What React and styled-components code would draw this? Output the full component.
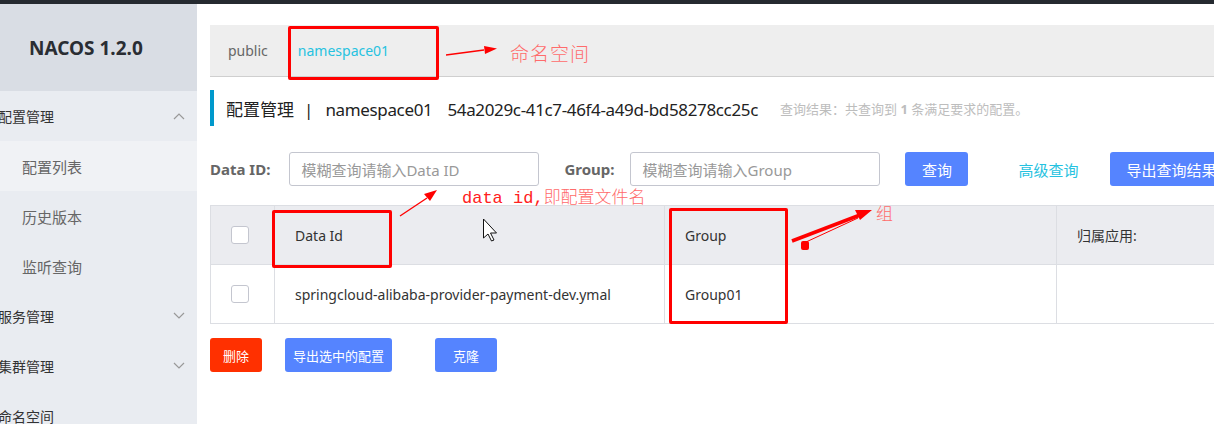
import React from 'react'
import styled, { createGlobalStyle } from 'styled-components'

const GlobalStyle = createGlobalStyle`
  html, body {
    margin: 0;
    padding: 0;
    background: #fff;
  }
  body {
    font-family: "Noto Sans", "Noto Sans CJK SC", sans-serif;
    font-size: 14px;
    color: #333;
  }
`

const Page = styled.div`
  position: relative;
  width: 1214px;
  height: 424px;
  overflow: hidden;
  display: flex;
  flex-direction: column;
`

const TopBar = styled.div`
  height: 4px;
  background: #252a30;
  flex-shrink: 0;
`

const Body = styled.div`
  flex: 1;
  display: flex;
  min-height: 0;
`

const Sidebar = styled.aside`
  width: 197px;
  flex-shrink: 0;
  background: #e9ecf1;
  display: flex;
  flex-direction: column;
  overflow: hidden;
`

const Brand = styled.div`
  height: 87px;
  flex-shrink: 0;
  background: #d9dde4;
  display: flex;
  align-items: center;
  padding-left: 29px;
  font-family: "Noto Sans", sans-serif;
  font-weight: 700;
  font-size: 19px;
  color: #2a2d33;
`

const MenuItem = styled.div`
  height: 50px;
  flex-shrink: 0;
  display: flex;
  align-items: center;
  justify-content: space-between;
  padding: 0 12px 0 ${p => (p.sub ? '22px' : '0')};
  background: ${p => (p.active ? '#f0f2f5' : 'transparent')};
  color: ${p => (p.sub ? '#666' : '#333')};
  font-size: ${p => (p.sub ? '15px' : '14px')};
  span {
    margin-left: ${p => (p.sub ? '0' : '-2px')};
  }
`

const Chevron = ({ up }) => (
  <svg width="12" height="8" viewBox="0 0 12 8">
    <path
      d={up ? 'M1 7 L6 2 L11 7' : 'M1 1 L6 6 L11 1'}
      fill="none"
      stroke="#999"
      strokeWidth="1.2"
    />
  </svg>
)

const Main = styled.main`
  flex: 1;
  min-width: 0;
  padding: 21px 0 0 13px;
  overflow: hidden;
`

const TabBar = styled.div`
  height: 51px;
  background: #eeeeee;
  border-bottom: 1px solid #cfcfcf;
  display: flex;
  align-items: center;
  padding-left: 18px;
  gap: 30px;
`

const Tab = styled.span`
  font-size: 14px;
  color: ${p => (p.current ? '#26c2e0' : '#666')};
`

const TitleRow = styled.div`
  margin-top: 13px;
  height: 36px;
  border-left: 4px solid #0099cc;
  display: flex;
  align-items: center;
  padding-left: 12px;
  white-space: nowrap;
`

const Title = styled.span`
  font-size: 17px;
  color: #222;
`

const Divider = styled.span`
  margin: 0 12px 0 10px;
`

const TitleCode = styled.span`
  letter-spacing: -0.35px;
  margin-left: ${p => p.gap || 0}px;
`

const ResultText = styled.span`
  margin-left: 22px;
  font-size: 13px;
  color: #bdbdbd;
  b {
    font-weight: 700;
    color: #bdbdbd;
  }
`

const SearchRow = styled.div`
  margin-top: 26px;
  height: 34px;
  display: flex;
  align-items: center;
  white-space: nowrap;
`

const Label = styled.label`
  font-weight: 700;
  font-size: 15px;
  color: #666;
  margin-right: ${p => p.gap}px;
`

const Input = styled.div`
  width: 250px;
  height: 34px;
  flex-shrink: 0;
  box-sizing: border-box;
  border: 1px solid #c4c6cf;
  border-radius: 3px;
  display: flex;
  align-items: center;
  padding-left: 11px;
  color: #999;
  font-size: 15px;
  margin-right: ${p => p.gap}px;
`

const Button = styled.button`
  height: 34px;
  width: ${p => p.w}px;
  flex-shrink: 0;
  border: none;
  border-radius: 3px;
  background: ${p => (p.danger ? '#ff3000' : '#5584ff')};
  color: #fff;
  font-family: inherit;
  font-size: ${p => p.fs || 13}px;
  padding: 0;
  margin-right: ${p => p.gap || 0}px;
  white-space: nowrap;
  cursor: pointer;
`

const LinkText = styled.span`
  color: #26c2e0;
  font-size: 15px;
  margin-right: ${p => p.gap}px;
`

const Table = styled.div`
  margin-top: 19px;
  border: 1px solid #dcdee3;
  border-right: none;
`

const Row = styled.div`
  display: grid;
  grid-template-columns: 63px 390px 392px 1fr;
  height: 58px;
  background: ${p => (p.head ? '#ebecf0' : '#fff')};
  border-top: ${p => (p.head ? 'none' : '1px solid #dcdee3')};
`

const Cell = styled.div`
  display: flex;
  align-items: center;
  padding-left: 20px;
  border-left: ${p => (p.first ? 'none' : '1px solid #dcdee3')};
  color: #333;
  font-size: 14px;
  white-space: nowrap;
`

const Check = styled.span`
  width: 18px;
  height: 18px;
  box-sizing: border-box;
  border: 1px solid #c4c6cf;
  border-radius: 3px;
  background: #fff;
`

const ActionRow = styled.div`
  margin-top: 14px;
  display: flex;
`

// annotation layer drawn over the screenshot
const Mark = styled.div`
  position: absolute;
  left: ${p => p.x}px;
  top: ${p => p.y}px;
  width: ${p => p.w}px;
  height: ${p => p.h}px;
  box-sizing: border-box;
  border: 3px solid #ff0000;
  border-radius: 2px;
`

const Note = styled.div`
  position: absolute;
  left: ${p => p.x}px;
  top: ${p => p.y}px;
  color: #ff6b6b;
  font-size: ${p => p.size}px;
  font-family: "Noto Sans CJK SC", sans-serif;
  font-weight: 300;
  white-space: nowrap;
  letter-spacing: ${p => p.ls || 0}px;
  span {
    font-family: "Liberation Mono", monospace;
    color: #ff2020;
    letter-spacing: 0;
  }
`

const Overlay = styled.svg`
  position: absolute;
  left: 0;
  top: 0;
  pointer-events: none;
`

export default function App() {
  return (
    <Page>
      <GlobalStyle />
      <TopBar />
      <Body>
        <Sidebar>
          <Brand>NACOS 1.2.0</Brand>
          <MenuItem>
            <span>配置管理</span>
            <Chevron up />
          </MenuItem>
          <MenuItem sub active>
            <span>配置列表</span>
          </MenuItem>
          <MenuItem sub>
            <span>历史版本</span>
          </MenuItem>
          <MenuItem sub>
            <span>监听查询</span>
          </MenuItem>
          <MenuItem>
            <span>服务管理</span>
            <Chevron />
          </MenuItem>
          <MenuItem>
            <span>集群管理</span>
            <Chevron />
          </MenuItem>
          <MenuItem>
            <span>命名空间</span>
          </MenuItem>
        </Sidebar>
        <Main>
          <TabBar>
            <Tab>public</Tab>
            <Tab current>namespace01</Tab>
          </TabBar>
          <TitleRow>
            <Title>
              配置管理<Divider>|</Divider>
              <TitleCode>namespace01</TitleCode>
              <TitleCode gap={15}>54a2029c-41c7-46f4-a49d-bd58278cc25c</TitleCode>
            </Title>
            <ResultText>
              查询结果：共查询到 <b>1</b> 条满足要求的配置。
            </ResultText>
          </TitleRow>
          <SearchRow>
            <Label gap={19}>Data ID:</Label>
            <Input gap={25}>模糊查询请输入Data ID</Input>
            <Label gap={16}>Group:</Label>
            <Input gap={25}>模糊查询请输入Group</Input>
            <Button w={63} gap={50} fs={15}>查询</Button>
            <LinkText gap={31}>高级查询</LinkText>
            <Button w={124} fs={15}>导出查询结果</Button>
          </SearchRow>
          <Table>
            <Row head>
              <Cell first>
                <Check />
              </Cell>
              <Cell>Data Id</Cell>
              <Cell>Group</Cell>
              <Cell>归属应用:</Cell>
            </Row>
            <Row>
              <Cell first>
                <Check />
              </Cell>
              <Cell>springcloud-alibaba-provider-payment-dev.ymal</Cell>
              <Cell>Group01</Cell>
              <Cell />
            </Row>
          </Table>
          <ActionRow>
            <Button danger w={52} gap={23}>删除</Button>
            <Button w={107} gap={43}>导出选中的配置</Button>
            <Button w={62}>克隆</Button>
          </ActionRow>
        </Main>
      </Body>

      <Mark x={288} y={26} w={151} h={54} />
      <Mark x={272} y={210} w={120} h={58} />
      <Mark x={669} y={208} w={119} h={116} />
      <Note x={510} y={39} size={19} ls={1}>命名空间</Note>
      <Note x={462} y={183} size={17}>
        <span>data id,</span>即配置文件名
      </Note>
      <Note x={876} y={200} size={17}>组</Note>
      <Overlay width="1214" height="424" viewBox="0 0 1214 424">
        <line x1="446" y1="55" x2="484" y2="50" stroke="#f00" strokeWidth="1.3" />
        <polygon points="484,46 497,48.5 485,54" fill="#f00" />
        <line x1="400" y1="216" x2="427" y2="198" stroke="#f00" strokeWidth="1.3" />
        <polygon points="424,194 437,190 430,201" fill="#f00" />
        <line x1="792" y1="241" x2="860" y2="215" stroke="#f00" strokeWidth="3.5" />
        <line x1="806" y1="242" x2="858" y2="218" stroke="#f00" strokeWidth="1" />
        <polygon points="855,210 872,210 860,220" fill="#f00" />
        <rect x="801" y="241" width="8" height="9" rx="2" fill="#f00" />
        <path
          d="M483.5 219 L483.5 238 L488 234 L491.5 241 L494 240 L490.5 233 L496.5 233 Z"
          fill="#fff"
          stroke="#111"
          strokeWidth="1"
          strokeLinejoin="round"
        />
      </Overlay>
    </Page>
  )
}
